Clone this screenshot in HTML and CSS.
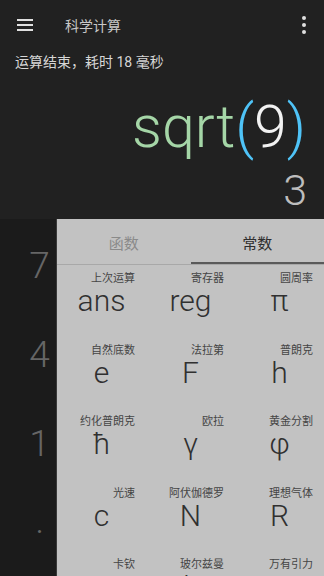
FILE: index.html
```html
<!DOCTYPE html>
<html lang="zh">
<head>
<meta charset="utf-8">
<link rel="stylesheet" href="styles.css">
</head>
<body>
<div class="app">
  <section class="display">
    <header class="toolbar">
      <span class="menu-btn">
        <svg width="16" height="12" viewBox="0 0 16 12"><rect x="0" y="0" width="16" height="2" fill="#e0e0e0"/><rect x="0" y="5" width="16" height="2" fill="#e0e0e0"/><rect x="0" y="10" width="16" height="2" fill="#e0e0e0"/></svg>
      </span>
      <span class="title">科学计算</span>
      <span class="more-btn">
        <svg width="4" height="18" viewBox="0 0 4 18"><circle cx="2" cy="2" r="2" fill="#e0e0e0"/><circle cx="2" cy="9" r="2" fill="#e0e0e0"/><circle cx="2" cy="16" r="2" fill="#e0e0e0"/></svg>
      </span>
    </header>
    <div class="status">运算结束，耗时 18 毫秒</div>
    <div class="expr"><span class="fn">sqrt</span><span class="paren">(</span><span class="num">9</span><span class="paren">)</span></div>
    <div class="result">3</div>
  </section>
  <section class="pad">
    <div class="keys">
      <div class="key">7</div><div class="key">8</div><div class="key">9</div><div class="key">÷</div>
      <div class="key">4</div><div class="key">5</div><div class="key">6</div><div class="key">×</div>
      <div class="key">1</div><div class="key">2</div><div class="key">3</div><div class="key">−</div>
      <div class="key">·</div><div class="key">0</div><div class="key">=</div><div class="key">+</div>
    </div>
    <div class="drawer">
      <div class="tabs">
        <div class="tab">函数</div>
        <div class="tab active">常数</div>
      </div>
      <div class="consts">
        <div class="c"><div class="lbl">上次运算</div><div class="val">ans</div></div>
        <div class="c"><div class="lbl">寄存器</div><div class="val">reg</div></div>
        <div class="c"><div class="lbl">圆周率</div><div class="val">π</div></div>
        <div class="c"><div class="lbl">自然底数</div><div class="val">e</div></div>
        <div class="c"><div class="lbl">法拉第</div><div class="val">F</div></div>
        <div class="c"><div class="lbl">普朗克</div><div class="val">h</div></div>
        <div class="c"><div class="lbl">约化普朗克</div><div class="val">ħ</div></div>
        <div class="c"><div class="lbl">欧拉</div><div class="val">γ</div></div>
        <div class="c"><div class="lbl">黄金分割</div><div class="val">φ</div></div>
        <div class="c"><div class="lbl">光速</div><div class="val">c</div></div>
        <div class="c"><div class="lbl">阿伏伽德罗</div><div class="val">N</div></div>
        <div class="c"><div class="lbl">理想气体</div><div class="val">R</div></div>
        <div class="c"><div class="lbl">卡钦</div><div class="val">K</div></div>
        <div class="c"><div class="lbl">玻尔兹曼</div><div class="val">k</div></div>
        <div class="c"><div class="lbl">万有引力</div><div class="val">G</div></div>
      </div>
    </div>
  </section>
</div>
</body>
</html>
```
FILE: styles.css
```css
* { box-sizing: border-box; }
html, body { margin: 0; padding: 0; }
body {
  width: 324px;
  height: 576px;
  overflow: hidden;
  font-family: Roboto, "Noto Sans CJK SC", sans-serif;
  background: #1b1b1b;
}
.app { display: flex; flex-direction: column; height: 576px; }
.display {
  height: 219px;
  background: #212121;
  display: flex;
  flex-direction: column;
}
.toolbar {
  height: 50px;
  display: flex;
  align-items: center;
}
.menu-btn { margin-left: 17px; display: flex; }
.title {
  margin-left: 32px;
  font-size: 14px;
  color: #c8c8c8;
  font-family: "Noto Sans CJK SC", sans-serif;
}
.more-btn { margin-left: auto; margin-right: 18px; display: flex; }
.status {
  margin-top: 2px;
  padding-left: 15px;
  font-size: 14px;
  line-height: 20px;
  color: #d6d6d6;
}
.expr {
  margin-top: 22px;
  padding-right: 18px;
  text-align: right;
  font-size: 59px;
  line-height: 66px;
  font-weight: 300;
}
.fn { color: #a5d6a7; }
.paren { color: #4fc3f7; }
.num { color: #f2f2f2; }
.result {
  margin-top: 5px;
  padding-right: 17px;
  text-align: right;
  font-size: 43px;
  line-height: 50px;
  font-weight: 300;
  color: #bdbdbd;
}
.pad {
  flex: 1;
  position: relative;
  overflow: hidden;
}
.keys {
  display: grid;
  grid-template-columns: repeat(4, 79px);
  grid-auto-rows: 89.25px;
}
.key {
  display: flex;
  align-items: center;
  justify-content: center;
  padding-top: 3px;
  font-size: 37px;
  font-weight: 300;
  color: #666;
}
.drawer {
  position: absolute;
  top: 0;
  left: 57px;
  right: 0;
  bottom: 0;
  background: #c2c2c2;
  box-shadow: -1px 0 0 #3a3a3a;
}
.tabs {
  display: flex;
  height: 46px;
  border-bottom: 1px solid #a8a8a8;
}
.tab {
  flex: 1;
  display: flex;
  align-items: center;
  justify-content: center;
  padding-top: 2px;
  font-size: 15px;
  font-family: "Noto Sans CJK SC", sans-serif;
  color: #8a8a8a;
}
.tab.active {
  color: #2e2e2e;
  box-shadow: inset 0 -2px 0 #5a5a5a;
}
.consts {
  display: grid;
  grid-template-columns: repeat(3, 1fr);
  grid-auto-rows: 71.5px;
}
.c {
  display: flex;
  flex-direction: column;
  padding-top: 5px;
}
.lbl {
  text-align: right;
  padding-right: 11px;
  font-size: 11px;
  line-height: 14px;
  color: #454545;
  font-family: "Noto Sans CJK SC", sans-serif;
}
.val {
  text-align: center;
  font-size: 30px;
  line-height: 34px;
  font-weight: 300;
  color: #303030;
}
```
